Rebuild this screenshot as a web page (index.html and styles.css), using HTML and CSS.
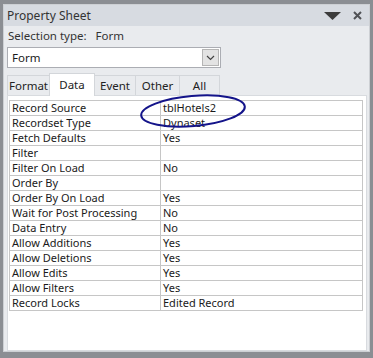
FILE: index.html
```html
<!DOCTYPE html>
<html lang="en">
<head>
    <meta charset="UTF-8">
    <title>Property Sheet</title>
    <link rel="stylesheet" href="styles.css">
</head>
<body>

    <div class="window">
        <div class="titlebar">
            <span class="title">Property Sheet</span>
            <span class="tools">
                <svg width="18" height="10" viewBox="0 0 18 10"><polygon points="0,1 17,1 8.5,9" fill="#3c3c3c"/></svg>
                <svg width="9" height="9" viewBox="0 0 9 9"><path d="M1 1 L8 8 M8 1 L1 8" stroke="#505256" stroke-width="2"/></svg>
            </span>
        </div>

        <div class="selection">Selection type:&nbsp;&nbsp;&nbsp;Form</div>

        <div class="combo">
            <span class="combo-text">Form</span>
            <span class="combo-btn">
                <svg width="9" height="6" viewBox="0 0 9 6"><path d="M1 1 L4.5 4.5 L8 1" fill="none" stroke="#444" stroke-width="1.2"/></svg>
            </span>
        </div>

        <div class="tabs">
            <div class="tab w-format">Format</div>
            <div class="tab active w-data">Data</div>
            <div class="tab w-event">Event</div>
            <div class="tab w-other">Other</div>
            <div class="tab w-all">All</div>
        </div>

        <div class="panel">
            <table class="props">
                <tr><td>Record Source</td><td>tblHotels2</td></tr>
                <tr><td>Recordset Type</td><td>Dynaset</td></tr>
                <tr><td>Fetch Defaults</td><td>Yes</td></tr>
                <tr><td>Filter</td><td></td></tr>
                <tr><td>Filter On Load</td><td>No</td></tr>
                <tr><td>Order By</td><td></td></tr>
                <tr><td>Order By On Load</td><td>Yes</td></tr>
                <tr><td>Wait for Post Processing</td><td>No</td></tr>
                <tr><td>Data Entry</td><td>No</td></tr>
                <tr><td>Allow Additions</td><td>Yes</td></tr>
                <tr><td>Allow Deletions</td><td>Yes</td></tr>
                <tr><td>Allow Edits</td><td>Yes</td></tr>
                <tr><td>Allow Filters</td><td>Yes</td></tr>
                <tr><td>Record Locks</td><td>Edited Record</td></tr>
            </table>
        </div>

        <svg class="circle" width="120" height="40" viewBox="0 0 120 40">
            <ellipse cx="58" cy="19" rx="52" ry="15" transform="rotate(-5 58 19)" fill="none" stroke="#14148a" stroke-width="2"/>
        </svg>
    </div>

</body>
</html>
```

FILE: styles.css
```css
body {
    margin: 0;
    background-color: #8b8e93;
    font-family: "Noto Sans", Arial, sans-serif;
    font-size: 11px;
    color: #1a1a1a;
}
.window {
    position: relative;
    margin: 4px 3px 0 3px;
    height: 346px;
    background: #e9ebee;
    border: 1px solid #cdd0d4;
    display: flex;
    flex-direction: column;
}
.titlebar {
    height: 21px;
    background: #d7dbe1;
    display: flex;
    align-items: center;
    justify-content: space-between;
    padding: 0 7px 0 3px;
}
.title {
    font-size: 12px;
    color: #333;
}
.tools {
    display: flex;
    align-items: center;
    gap: 11px;
}
.selection {
    height: 21px;
    line-height: 19px;
    padding-left: 4px;
    color: #333;
    font-size: 11.5px;
}
.combo {
    margin-left: 3px;
    width: 212px;
    height: 19px;
    background: #fff;
    border: 1px solid #abadb3;
    display: flex;
    align-items: center;
    justify-content: space-between;
}
.combo-text {
    padding-left: 4px;
    font-size: 11.5px;
}
.combo-btn {
    width: 15px;
    height: 15px;
    margin-right: 1px;
    background: #e3e3e3;
    border: 1px solid #b5b5b5;
    display: flex;
    align-items: center;
    justify-content: center;
}
.tabs {
    display: flex;
    margin: 5px 0 0 3px;
    height: 22px;
    align-items: flex-end;
}
.tab {
    box-sizing: border-box;
    height: 20px;
    line-height: 19px;
    text-align: center;
    border: 1px solid #d3d6da;
    border-bottom: none;
    margin-right: -1px;
    color: #222;
    font-size: 11.5px;
}
.tab.active {
    height: 23px;
    line-height: 21px;
    background: #fff;
    position: relative;
    z-index: 1;
    margin-bottom: -1px;
}
.w-format { width: 43px; }
.w-data { width: 46px; }
.w-event { width: 42px; }
.w-other { width: 45px; }
.w-all { width: 41px; }
.panel {
    flex: 1;
    margin: 0 2px 0 3px;
    background: #fff;
    border: 1px solid #d8dbdf;
    padding: 4px 3px 0 1px;
}
.props {
    width: 100%;
    border-collapse: collapse;
    border: 1px solid #a9a9a9;
}
.props td {
    height: 14px;
    padding: 0 0 0 2px;
    border: 1px solid #c6c6c6;
    line-height: 14px;
    white-space: nowrap;
}
.props td:first-child {
    width: 148px;
}
.circle {
    position: absolute;
    left: 131px;
    top: 87px;
}
```
